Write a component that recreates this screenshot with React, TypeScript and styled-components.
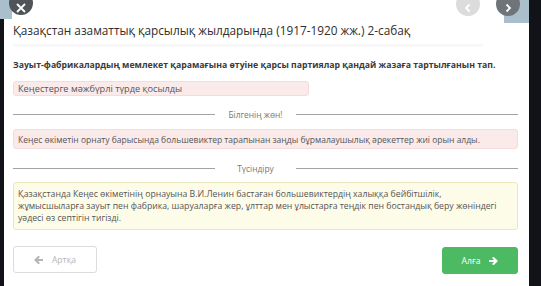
import React from "react";
import styled, { createGlobalStyle } from "styled-components";

const Global = createGlobalStyle`
  html, body { margin: 0; padding: 0; background: #111318; }
  body { width: 541px; height: 286px; overflow: hidden; font-family: "Open Sans", "Noto Sans", sans-serif; }
  #root { width: 541px; height: 286px; }
`;

const Frame = styled.div`
  position: relative;
  display: flex;
  width: 541px;
  height: 286px;
  background: #111318;
`;

const Page = styled.main`
  margin-left: 4px;
  width: 525px;
  height: 286px;
  background: #ffffff;
  box-sizing: border-box;
  padding: 20px 11px 0 9px;
  display: flex;
  flex-direction: column;
`;

const Title = styled.h1`
  margin: 0;
  font-size: 11.8px;
  font-weight: 400;
  line-height: 20px;
  color: #2e2e2e;
`;

const Ghost = styled.div`
  margin-top: 4px;
  height: 3px;
  width: 470px;
  background: #f8f8f8;
`;

const Question = styled.h2`
  margin: 12px 0 0;
  font-size: 8.7px;
  font-weight: 700;
  line-height: 12px;
  color: #3a3a3a;
  white-space: nowrap;
`;

const Box = styled.div<{ $tone: "pink" | "yellow"; $w?: number }>`
  box-sizing: border-box;
  width: ${(p) => (p.$w ? `${p.$w}px` : "100%")};
  background: ${(p) => (p.$tone === "pink" ? "#fbeaea" : "#fdfce9")};
  border: 1px solid ${(p) => (p.$tone === "pink" ? "#f4dcdc" : "#ebe7bf")};
  border-radius: 3px;
  color: #555;
  font-size: 8.5px;
  line-height: 11px;
`;

const Answer = styled(Box)`
  margin-top: 10px;
  height: 15px;
  padding: 1px 4px;
  font-size: 9.2px;
  line-height: 12px;
`;

const Info = styled(Box)`
  margin-top: 9px;
  height: 20px;
  padding: 4px 4px;
`;

const Explain = styled(Box)`
  margin-top: 8px;
  height: 48px;
  padding: 5px 4px 0;
  font-size: 8.7px;
  line-height: 12px;
  white-space: nowrap;
`;

const Divider = styled.div<{ $top: number }>`
  margin-top: ${(p) => p.$top}px;
  display: grid;
  grid-template-columns: 202fr 81px 222fr;
  align-items: center;
  height: 12px;
`;

const Rule = styled.span`
  height: 1px;
  background: #a3a3a3;
`;

const DividerLabel = styled.span`
  text-align: center;
  font-size: 8.4px;
  color: #777;
`;

const Actions = styled.div`
  margin-top: 16px;
  display: flex;
  justify-content: space-between;
  align-items: flex-start;
`;

const Button = styled.button<{ $primary?: boolean }>`
  box-sizing: border-box;
  display: flex;
  align-items: center;
  justify-content: center;
  gap: 9px;
  height: 27px;
  width: ${(p) => (p.$primary ? "76px" : "84px")};
  margin-top: ${(p) => (p.$primary ? "1px" : "0")};
  border-radius: 3px;
  border: 1px solid ${(p) => (p.$primary ? "#4cb963" : "#dcdcdc")};
  background: ${(p) => (p.$primary ? "#4cb963" : "#ffffff")};
  color: ${(p) => (p.$primary ? "#ffffff" : "#b5b5b5")};
  font-family: "Open Sans", sans-serif;
  font-size: 8.6px;
  padding: 0;
`;

const Arrow = ({ dir, color }: { dir: "left" | "right"; color: string }) => (
  <svg width="9" height="8" viewBox="0 0 9 8" style={{ transform: dir === "left" ? "scaleX(-1)" : undefined }}>
    <path d="M0.5 4 H7.2 M4.4 1 L7.6 4 L4.4 7" stroke={color} strokeWidth="2" fill="none" strokeLinecap="round" strokeLinejoin="round" />
  </svg>
);

const Overlay = styled.div<{ $left: number; $top: number; $w: number; $h: number; $bg: string; $round?: boolean }>`
  position: absolute;
  left: ${(p) => p.$left}px;
  top: ${(p) => p.$top}px;
  width: ${(p) => p.$w}px;
  height: ${(p) => p.$h}px;
  background: ${(p) => p.$bg};
  border-radius: ${(p) => (p.$round ? "50%" : "0")};
  display: flex;
  align-items: center;
  justify-content: center;
`;

export default function App() {
  return (
    <>
      <Global />
      <Frame>
        <Page>
          <Title>Қазақстан азаматтық қарсылық жылдарында (1917-1920 жж.) 2-сабақ</Title>
          <Ghost />
          <Question>
            Зауыт-фабрикалардың мемлекет қарамағына өтуіне қарсы партиялар қандай жазаға тартылғанын тап.
          </Question>
          <Answer $tone="pink" $w={296}>Кеңестерге мәжбүрлі түрде қосылды</Answer>
          <Divider $top={12}>
            <Rule />
            <DividerLabel>Білгенің жөн!</DividerLabel>
            <Rule />
          </Divider>
          <Info $tone="pink">
            Кеңес өкіметін орнату барысында большевиктер тарапынан заңды бұрмалаушылық әрекеттер жиі орын алды.
          </Info>
          <Divider $top={13}>
            <Rule />
            <DividerLabel>Түсіндіру</DividerLabel>
            <Rule />
          </Divider>
          <Explain $tone="yellow">
            Қазақстанда Кеңес өкіметінің орнауына В.И.Ленин бастаған большевиктердің халыққа бейбітшілік,
            <br />
            жұмысшыларға зауыт пен фабрика, шаруаларға жер, ұлттар мен ұлыстарға теңдік пен бостандық беру жөніндегі
            <br />
            уәдесі өз септігін тигізді.
          </Explain>
          <Actions>
            <Button>
              <Arrow dir="left" color="#b5b5b5" />
              Артқа
            </Button>
            <Button $primary>
              Алға
              <Arrow dir="right" color="#ffffff" />
            </Button>
          </Actions>
        </Page>
        <Overlay $left={0} $top={0} $w={12} $h={19} $bg="#a9bfcc" />
        <Overlay $left={9} $top={-9} $w={24} $h={24} $bg="#505357" $round>
          <svg width="12" height="12" viewBox="0 0 12 12" style={{ marginTop: 9 }}>
            <path d="M2 2 L10 10 M10 2 L2 10" stroke="#fff" strokeWidth="1.8" />
          </svg>
        </Overlay>
        <Overlay $left={504} $top={0} $w={25} $h={23} $bg="#a9bfcc" />
        <Overlay $left={456} $top={-8} $w={24} $h={24} $bg="#dcdcdc" $round>
          <svg width="10" height="10" viewBox="0 0 10 10" style={{ marginTop: 8 }}>
            <path d="M6.5 1.5 L3 5 L6.5 8.5" stroke="#fff" strokeWidth="1.8" fill="none" />
          </svg>
        </Overlay>
        <Overlay $left={496} $top={-8} $w={24} $h={24} $bg="#6f7478" $round>
          <svg width="10" height="10" viewBox="0 0 10 10" style={{ marginTop: 8 }}>
            <path d="M3.5 1.5 L7 5 L3.5 8.5" stroke="#fff" strokeWidth="1.8" fill="none" />
          </svg>
        </Overlay>
      </Frame>
    </>
  );
}
